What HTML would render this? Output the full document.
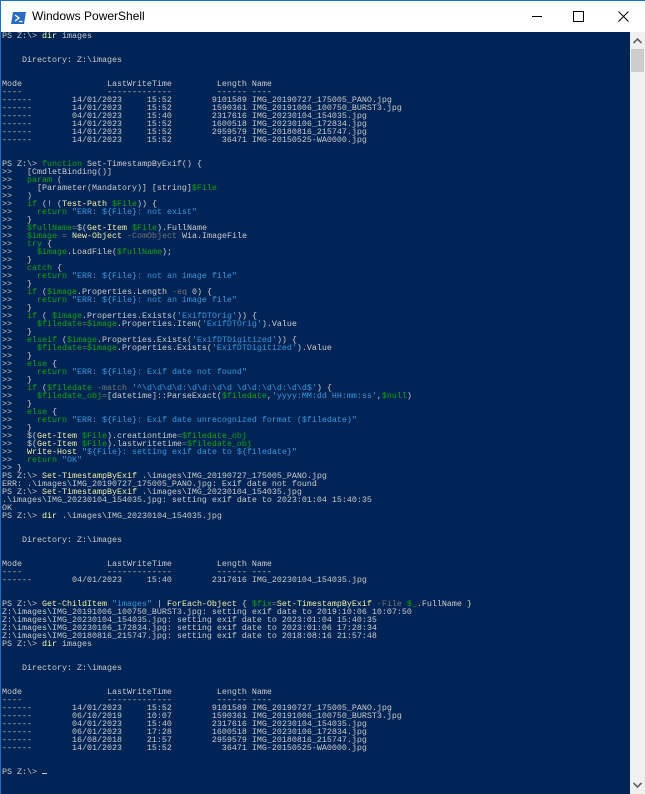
<!DOCTYPE html>
<html><head><meta charset="utf-8"><style>
html,body{margin:0;padding:0;width:645px;height:794px;overflow:hidden;background:#012456}
#win{position:absolute;left:0;top:0;width:645px;height:794px;background:#012456}
#tb{position:absolute;left:0;top:0;width:645px;height:32px;background:#fff;border-top:1px solid #1a6ec4;box-sizing:border-box}
#lb{position:absolute;left:0;top:0;width:1px;height:794px;background:#1a6ec4}
#title{position:absolute;left:32px;top:8px;font:12px "Liberation Sans",sans-serif;color:#000}
#con{position:absolute;left:2px;top:32px;width:628px;height:762px;overflow:hidden}
pre{margin:0;font-family:"Liberation Mono",monospace;font-size:8.33px;line-height:8px;color:#cccccc;white-space:pre}
.c{color:#f9f1a5}.k{color:#13a10e}.s{color:#3a96dd}.o{color:#767676}.w{color:#f2f2f2}
#sb{position:absolute;left:630px;top:32px;width:15px;height:762px;background:#f0f0f0}
#thumb{position:absolute;left:1px;top:17px;width:13px;height:23px;background:#cdcdcd}
#cur{display:inline-block;width:5px;height:1px;background:#ccc;vertical-align:baseline}
</style></head><body><div id="win">
<div id="tb">
<svg style="position:absolute;left:11px;top:11px" width="15" height="12" viewBox="0 0 15 12"><polygon points="2,0 15,0 13,12 0,12" fill="#2a6cc0"/><polyline points="4,3 8,6 4,9" fill="none" stroke="#fff" stroke-width="1.3"/><line x1="8" y1="9.5" x2="11.5" y2="9.5" stroke="#fff" stroke-width="1.2"/></svg>
<div id="title">Windows PowerShell</div>
<div style="position:absolute;left:532px;top:15px;width:10px;height:1px;background:#000"></div>
<div style="position:absolute;left:573px;top:10px;width:9px;height:9px;border:1px solid #000"></div>
<svg style="position:absolute;left:618px;top:10px" width="11" height="11"><path d="M0.5 0.5L10.5 10.5M10.5 0.5L0.5 10.5" stroke="#000" stroke-width="1"/></svg>
</div>
<div id="lb"></div>
<div id="con"><pre>PS Z:\&gt; <span class="c">dir</span> images


    Directory: Z:\images


Mode                 LastWriteTime         Length Name
----                 -------------         ------ ----
------        14/01/2023     15:52        9101589 IMG_20190727_175005_PANO.jpg
------        14/01/2023     15:52        1590361 IMG_20191006_100750_BURST3.jpg
------        04/01/2023     15:40        2317616 IMG_20230104_154035.jpg
------        14/01/2023     15:52        1600518 IMG_20230106_172834.jpg
------        14/01/2023     15:52        2959579 IMG_20180816_215747.jpg
------        14/01/2023     15:52          36471 IMG-20150525-WA0000.jpg


PS Z:\&gt; <span class="k">function</span> Set-TimestampByExif() {
&gt;&gt;   [CmdletBinding()]
&gt;&gt;   <span class="k">param</span> (
&gt;&gt;     [Parameter(Mandatory)] [string]<span class="k">$File</span>
&gt;&gt;   )
&gt;&gt;   <span class="k">if</span> (! (<span class="c">Test-Path</span> <span class="k">$File</span>)) {
&gt;&gt;     <span class="k">return</span> <span class="s">"ERR: ${File}: not exist"</span>
&gt;&gt;   }
&gt;&gt;   <span class="k">$fullName</span><span class="o">=</span>$(<span class="c">Get-Item</span> <span class="k">$File</span>).FullName
&gt;&gt;   <span class="k">$image</span> <span class="o">=</span> <span class="c">New-Object</span> <span class="o">-ComObject</span> Wia.ImageFile
&gt;&gt;   <span class="k">try</span> {
&gt;&gt;     <span class="k">$image</span>.LoadFile(<span class="k">$fullName</span>);
&gt;&gt;   }
&gt;&gt;   <span class="k">catch</span> {
&gt;&gt;     <span class="k">return</span> <span class="s">"ERR: ${File}: not an image file"</span>
&gt;&gt;   }
&gt;&gt;   <span class="k">if</span> (<span class="k">$image</span>.Properties.Length <span class="o">-eq</span> 0) {
&gt;&gt;     <span class="k">return</span> <span class="s">"ERR: ${File}: not an image file"</span>
&gt;&gt;   }
&gt;&gt;   <span class="k">if</span> ( <span class="k">$image</span>.Properties.Exists(<span class="s">'ExifDTOrig'</span>)) {
&gt;&gt;     <span class="k">$filedate</span><span class="o">=</span><span class="k">$image</span>.Properties.Item(<span class="s">'ExifDTOrig'</span>).Value
&gt;&gt;   }
&gt;&gt;   <span class="k">elseif</span> (<span class="k">$image</span>.Properties.Exists(<span class="s">'ExifDTDigitized'</span>)) {
&gt;&gt;     <span class="k">$filedate</span><span class="o">=</span><span class="k">$image</span>.Properties.Exists(<span class="s">'ExifDTDigitized'</span>).Value
&gt;&gt;   }
&gt;&gt;   <span class="k">else</span> {
&gt;&gt;     <span class="k">return</span> <span class="s">"ERR: ${File}: Exif date not found"</span>
&gt;&gt;   }
&gt;&gt;   <span class="k">if</span> (<span class="k">$filedate</span> <span class="o">-match</span> <span class="s">'^\d\d\d\d:\d\d:\d\d \d\d:\d\d:\d\d$'</span>) {
&gt;&gt;     <span class="k">$filedate_obj</span><span class="o">=</span>[datetime]::ParseExact(<span class="k">$filedate</span>,<span class="s">'yyyy:MM:dd HH:mm:ss'</span>,<span class="k">$null</span>)
&gt;&gt;   }
&gt;&gt;   <span class="k">else</span> {
&gt;&gt;     <span class="k">return</span> <span class="s">"ERR: ${File}: Exif date unrecognized format ($filedate)"</span>
&gt;&gt;   }
&gt;&gt;   $(<span class="c">Get-Item</span> <span class="k">$File</span>).creationtime<span class="o">=</span><span class="k">$filedate_obj</span>
&gt;&gt;   $(<span class="c">Get-Item</span> <span class="k">$File</span>).lastwritetime<span class="o">=</span><span class="k">$filedate_obj</span>
&gt;&gt;   <span class="c">Write-Host</span> <span class="s">"${File}: setting exif date to ${filedate}"</span>
&gt;&gt;   <span class="k">return</span> <span class="s">"OK"</span>
&gt;&gt; }
PS Z:\&gt; <span class="c">Set-TimestampByExif</span> .\images\IMG_20190727_175005_PANO.jpg
ERR: .\images\IMG_20190727_175005_PANO.jpg: Exif date not found
PS Z:\&gt; <span class="c">Set-TimestampByExif</span> .\images\IMG_20230104_154035.jpg
.\images\IMG_20230104_154035.jpg: setting exif date to 2023:01:04 15:40:35
OK
PS Z:\&gt; <span class="c">dir</span> .\images\IMG_20230104_154035.jpg


    Directory: Z:\images


Mode                 LastWriteTime         Length Name
----                 -------------         ------ ----
------        04/01/2023     15:40        2317616 IMG_20230104_154035.jpg


PS Z:\&gt; <span class="c">Get-ChildItem</span> <span class="s">"images"</span> | <span class="c">ForEach-Object</span> { <span class="k">$fix</span><span class="o">=</span><span class="c">Set-TimestampByExif</span> <span class="o">-File</span> <span class="k">$_</span>.FullName }
Z:\images\IMG_20191006_100750_BURST3.jpg: setting exif date to 2019:10:06 10:07:50
Z:\images\IMG_20230104_154035.jpg: setting exif date to 2023:01:04 15:40:35
Z:\images\IMG_20230106_172834.jpg: setting exif date to 2023:01:06 17:28:34
Z:\images\IMG_20180816_215747.jpg: setting exif date to 2018:08:16 21:57:48
PS Z:\&gt; <span class="c">dir</span> images


    Directory: Z:\images


Mode                 LastWriteTime         Length Name
----                 -------------         ------ ----
------        14/01/2023     15:52        9101589 IMG_20190727_175005_PANO.jpg
------        06/10/2019     10:07        1590361 IMG_20191006_100750_BURST3.jpg
------        04/01/2023     15:40        2317616 IMG_20230104_154035.jpg
------        06/01/2023     17:28        1600518 IMG_20230106_172834.jpg
------        16/08/2018     21:57        2959579 IMG_20180816_215747.jpg
------        14/01/2023     15:52          36471 IMG-20150525-WA0000.jpg


PS Z:\&gt; <span id="cur"></span></pre></div>
<div id="sb">
<svg style="position:absolute;left:3px;top:6px" width="9" height="6"><path d="M0.5 5L4.5 1L8.5 5" fill="none" stroke="#606060" stroke-width="1.6"/></svg>
<div id="thumb"></div>
<svg style="position:absolute;left:3px;top:750px" width="9" height="6"><path d="M0.5 1L4.5 5L8.5 1" fill="none" stroke="#606060" stroke-width="1.6"/></svg>
</div>
</div></body></html>
